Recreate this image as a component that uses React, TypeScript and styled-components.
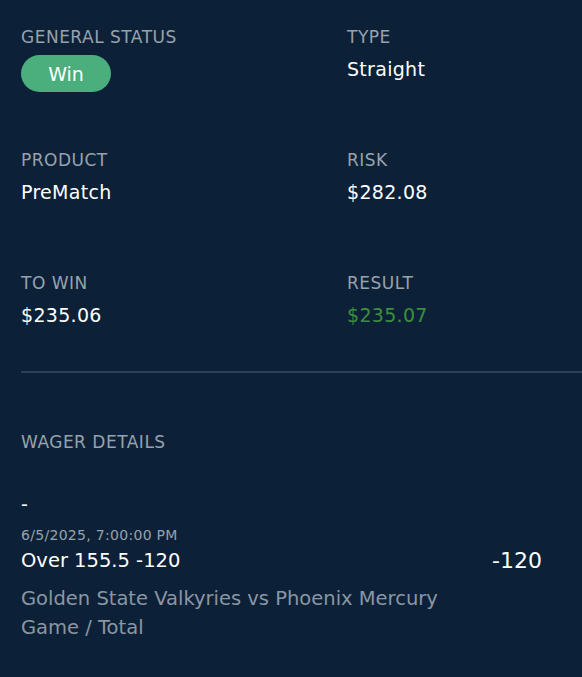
import styled, { createGlobalStyle } from "styled-components";

const GlobalStyle = createGlobalStyle`
  html, body {
    margin: 0;
    padding: 0;
    background: #0c2138;
  }
  body {
    font-family: "DejaVu Sans", "Noto Sans", sans-serif;
  }
`;

const Page = styled.div`
  width: 582px;
  min-height: 677px;
  background: #0c2138;
  color: #ffffff;
  padding-top: 27px;
  box-sizing: border-box;
`;

const Grid = styled.div`
  display: grid;
  grid-template-columns: 326px 1fr;
  grid-auto-rows: 98px;
  row-gap: 25px;
  padding-left: 21px;
`;

const Cell = styled.div`
  display: flex;
  flex-direction: column;
`;

const Label = styled.div`
  font-size: 17px;
  line-height: 20px;
  color: #98a2ad;
  letter-spacing: 0.5px;
`;

const Value = styled.div<{ $tone?: "green" }>`
  font-size: 19px;
  line-height: 24px;
  margin-top: 10px;
  letter-spacing: 0.3px;
  color: ${(p) => (p.$tone === "green" ? "#3d8f3c" : "#ffffff")};
`;

const Pill = styled.div`
  margin-top: 8px;
  width: 90px;
  height: 37px;
  border-radius: 19px;
  background: #4aae7d;
  color: #ffffff;
  font-size: 19px;
  display: flex;
  align-items: center;
  justify-content: center;
`;

const Divider = styled.hr`
  margin: 0 0 0 21px;
  border: none;
  height: 2px;
  background: #2c3f56;
`;

const Details = styled.section`
  padding: 59px 40px 0 21px;
`;

const Dash = styled.div`
  margin-top: 40px;
  font-size: 19px;
  line-height: 24px;
`;

const Leg = styled.div`
  display: grid;
  grid-template-columns: 1fr auto;
  margin-top: 10px;
`;

const When = styled.div`
  font-size: 14px;
  line-height: 18px;
  letter-spacing: 0.3px;
  color: #98a2ad;
`;

const Pick = styled.div`
  font-size: 19.5px;
  line-height: 28px;
  margin-top: 3px;
`;

const Odds = styled.div`
  font-size: 22px;
  align-self: end;
  line-height: 28px;
`;

const Sub = styled.div`
  font-size: 19.5px;
  line-height: 29px;
  color: #8b96a3;
  margin-top: 9px;
`;

const summary = [
  { label: "PRODUCT", value: "PreMatch" },
  { label: "RISK", value: "$282.08" },
  { label: "TO WIN", value: "$235.06" },
  { label: "RESULT", value: "$235.07", tone: "green" as const },
];

export default function App() {
  return (
    <Page>
      <GlobalStyle />
      <Grid>
        <Cell>
          <Label>GENERAL STATUS</Label>
          <Pill>Win</Pill>
        </Cell>
        <Cell>
          <Label>TYPE</Label>
          <Value>Straight</Value>
        </Cell>
        {summary.map((s) => (
          <Cell key={s.label}>
            <Label>{s.label}</Label>
            <Value $tone={s.tone}>{s.value}</Value>
          </Cell>
        ))}
      </Grid>
      <Divider />
      <Details>
        <Label>WAGER DETAILS</Label>
        <Dash>-</Dash>
        <Leg>
          <div>
            <When>6/5/2025, 7:00:00 PM</When>
            <Pick>Over 155.5 -120</Pick>
          </div>
          <Odds>-120</Odds>
        </Leg>
        <Sub>
          Golden State Valkyries vs Phoenix Mercury
          <br />
          Game / Total
        </Sub>
      </Details>
    </Page>
  );
}
